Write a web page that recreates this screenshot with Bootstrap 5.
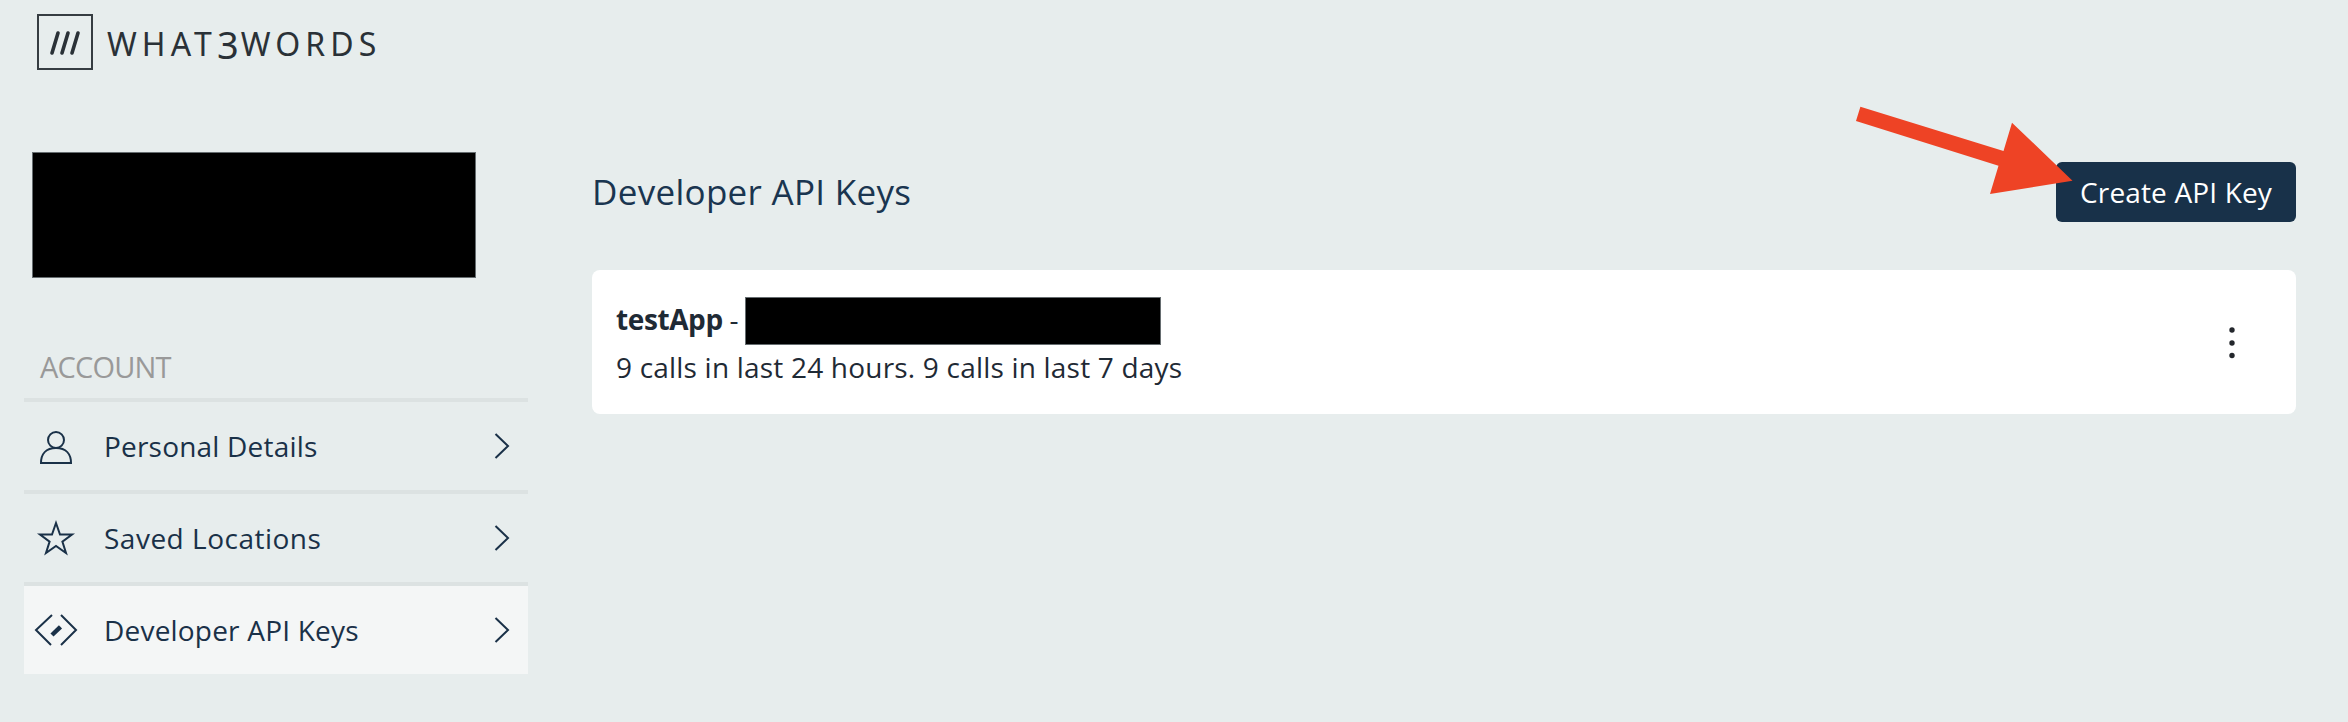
<!DOCTYPE html>
<html lang="en">
<head>
<meta charset="utf-8">
<title>Developer API Keys</title>
<link href="https://cdn.jsdelivr.net/npm/bootstrap@5.3.0/dist/css/bootstrap.min.css" rel="stylesheet">
<style>
html,body{height:100%}
body{background:#e7eded;color:#1f2a35;font-family:"Open Sans","Noto Sans",sans-serif;font-size:28px;letter-spacing:.2px;overflow:hidden}
.w3-head{padding:14px 0 0 37px;height:152px}
.w3-brand{gap:14px}
.w3-mark{width:56px;height:56px;border:2px solid #363d42}
.w3-name{font-family:"Noto Sans",sans-serif;font-weight:400;font-size:32px;letter-spacing:5.1px;color:#2a3137;line-height:1;margin-top:-3px}
.w3-three{font-size:38px;position:relative;top:3px;letter-spacing:2px}
.w3-side{width:504px;margin-left:24px;flex:none}
.w3-redact-a{width:444px;height:126px;margin-left:8px;background:#000;border:1px solid #666d70}
.w3-account{color:#999;margin:66px 0 0 16px;height:54px;line-height:45px;font-size:29px;letter-spacing:-.8px}
.w3-nav .list-group-item{background:transparent;background-clip:padding-box;border:0;border-top:4px solid #dce2e2;border-radius:0;height:92px;padding:0 18px 0 8px;color:#1a3148;gap:24px;font-size:28px;letter-spacing:.2px;margin:0}
.w3-nav .list-group-item.active{background:#f4f6f6;background-clip:padding-box;border-top:4px solid #dce2e2;margin-top:0;color:#1a3148;z-index:auto}
.w3-nav svg{fill:none;stroke:#1a3148;stroke-width:2}
.w3-wide{letter-spacing:.5px}
.w3-main{margin:0 52px 0 64px;padding-top:10px;min-width:0}
.w3-title{font-size:35px;color:#1a3550;margin:0;font-weight:400;letter-spacing:.3px}
.w3-btn{background:#183149;border:0;color:#fff;width:240px;height:60px;font-size:28px;letter-spacing:.15px;border-radius:6px;padding:0}
.w3-btn:hover{background:#183149;color:#fff}
.w3-arrow{left:-206px;top:-62px;pointer-events:none}
.w3-card{margin-top:48px;height:144px;border:0;border-radius:8px;padding:27px 60px 0 24px;color:#1f2a35}
.w3-key{width:416px;height:48px;background:#000;border:1px solid #666d70}
.w3-l1{height:48px}
.w3-l1-text{letter-spacing:-.4px;margin-top:-5px;margin-right:7px}
.w3-l2{line-height:44px;margin-top:0}
.w3-dots{fill:#23272c;margin-top:28px}
</style>
</head>
<body>
<header class="w3-head">
  <div class="w3-brand d-flex align-items-center">
    <div class="w3-mark flex-shrink-0">
      <svg width="52" height="52" viewBox="0 0 52 52"><g stroke="#2a3137" stroke-width="3.6" stroke-linecap="round"><path d="M13 37 19 17"/><path d="M23 37 29 17"/><path d="M33 37 39 17"/></g></svg>
    </div>
    <div class="w3-name">WHAT<span class="w3-three">3</span>WORDS</div>
  </div>
</header>
<div class="d-flex">
  <aside class="w3-side">
    <div class="w3-redact-a"></div>
    <div class="w3-account">ACCOUNT</div>
    <div class="list-group w3-nav">
      <a href="#" class="list-group-item d-flex align-items-center">
        <svg width="48" height="48" viewBox="0 0 48 48"><circle cx="24" cy="18" r="8"/><path d="M9 41C9 32 14 26 24 26S39 32 39 41Z"/></svg>
        <span>Personal Details</span>
        <svg class="ms-auto" width="16" height="28" viewBox="0 0 16 28"><path d="M1.5 2 14 14 1.5 26"/></svg>
      </a>
      <a href="#" class="list-group-item d-flex align-items-center">
        <svg width="48" height="48" viewBox="0 0 48 48"><path d="M24 9 28 20.5H40L30.4 27.6 34 39 24 32 14 39 17.6 27.6 8 20.5H20Z"/></svg>
        <span class="w3-wide">Saved Locations</span>
        <svg class="ms-auto" width="16" height="28" viewBox="0 0 16 28"><path d="M1.5 2 14 14 1.5 26"/></svg>
      </a>
      <a href="#" class="list-group-item active d-flex align-items-center">
        <svg width="48" height="48" viewBox="0 0 48 48"><path d="M20 9 4 24 19 39"/><path d="M29 9 44 24 29 39"/><path d="M20 29 28.500 20.800" stroke-width="4.500"/></svg>
        <span>Developer API Keys</span>
        <svg class="ms-auto" width="16" height="28" viewBox="0 0 16 28"><path d="M1.5 2 14 14 1.5 26"/></svg>
      </a>
    </div>
  </aside>
  <main class="w3-main flex-grow-1">
    <div class="d-flex justify-content-between align-items-center">
      <h1 class="w3-title">Developer API Keys</h1>
      <div class="position-relative">
        <button type="button" class="btn w3-btn">Create API Key</button>
        <svg class="w3-arrow position-absolute" width="230" height="100" viewBox="0 0 230 100"><path fill="#ee4325" d="M10.400 6.700 6 21 148.500 65.700 140 94 222.500 80.700 162 22.700 153.500 51Z"/></svg>
      </div>
    </div>
    <div class="card w3-card">
      <div class="d-flex h-100 align-items-start">
        <div>
          <div class="w3-l1 d-flex align-items-center"><span class="w3-l1-text"><strong>testApp</strong> -</span><span class="w3-key d-inline-block"></span></div>
          <div class="w3-l2">9 calls in last 24 hours. 9 calls in last 7 days</div>
        </div>
        <svg class="ms-auto w3-dots" width="8" height="36" viewBox="0 0 8 36"><circle cx="4" cy="5" r="2.700"/><circle cx="4" cy="18" r="2.700"/><circle cx="4" cy="30.500" r="2.700"/></svg>
      </div>
    </div>
  </main>
</div>
<script src="https://cdn.jsdelivr.net/npm/bootstrap@5.3.0/dist/js/bootstrap.bundle.min.js"></script>
</body>
</html>
